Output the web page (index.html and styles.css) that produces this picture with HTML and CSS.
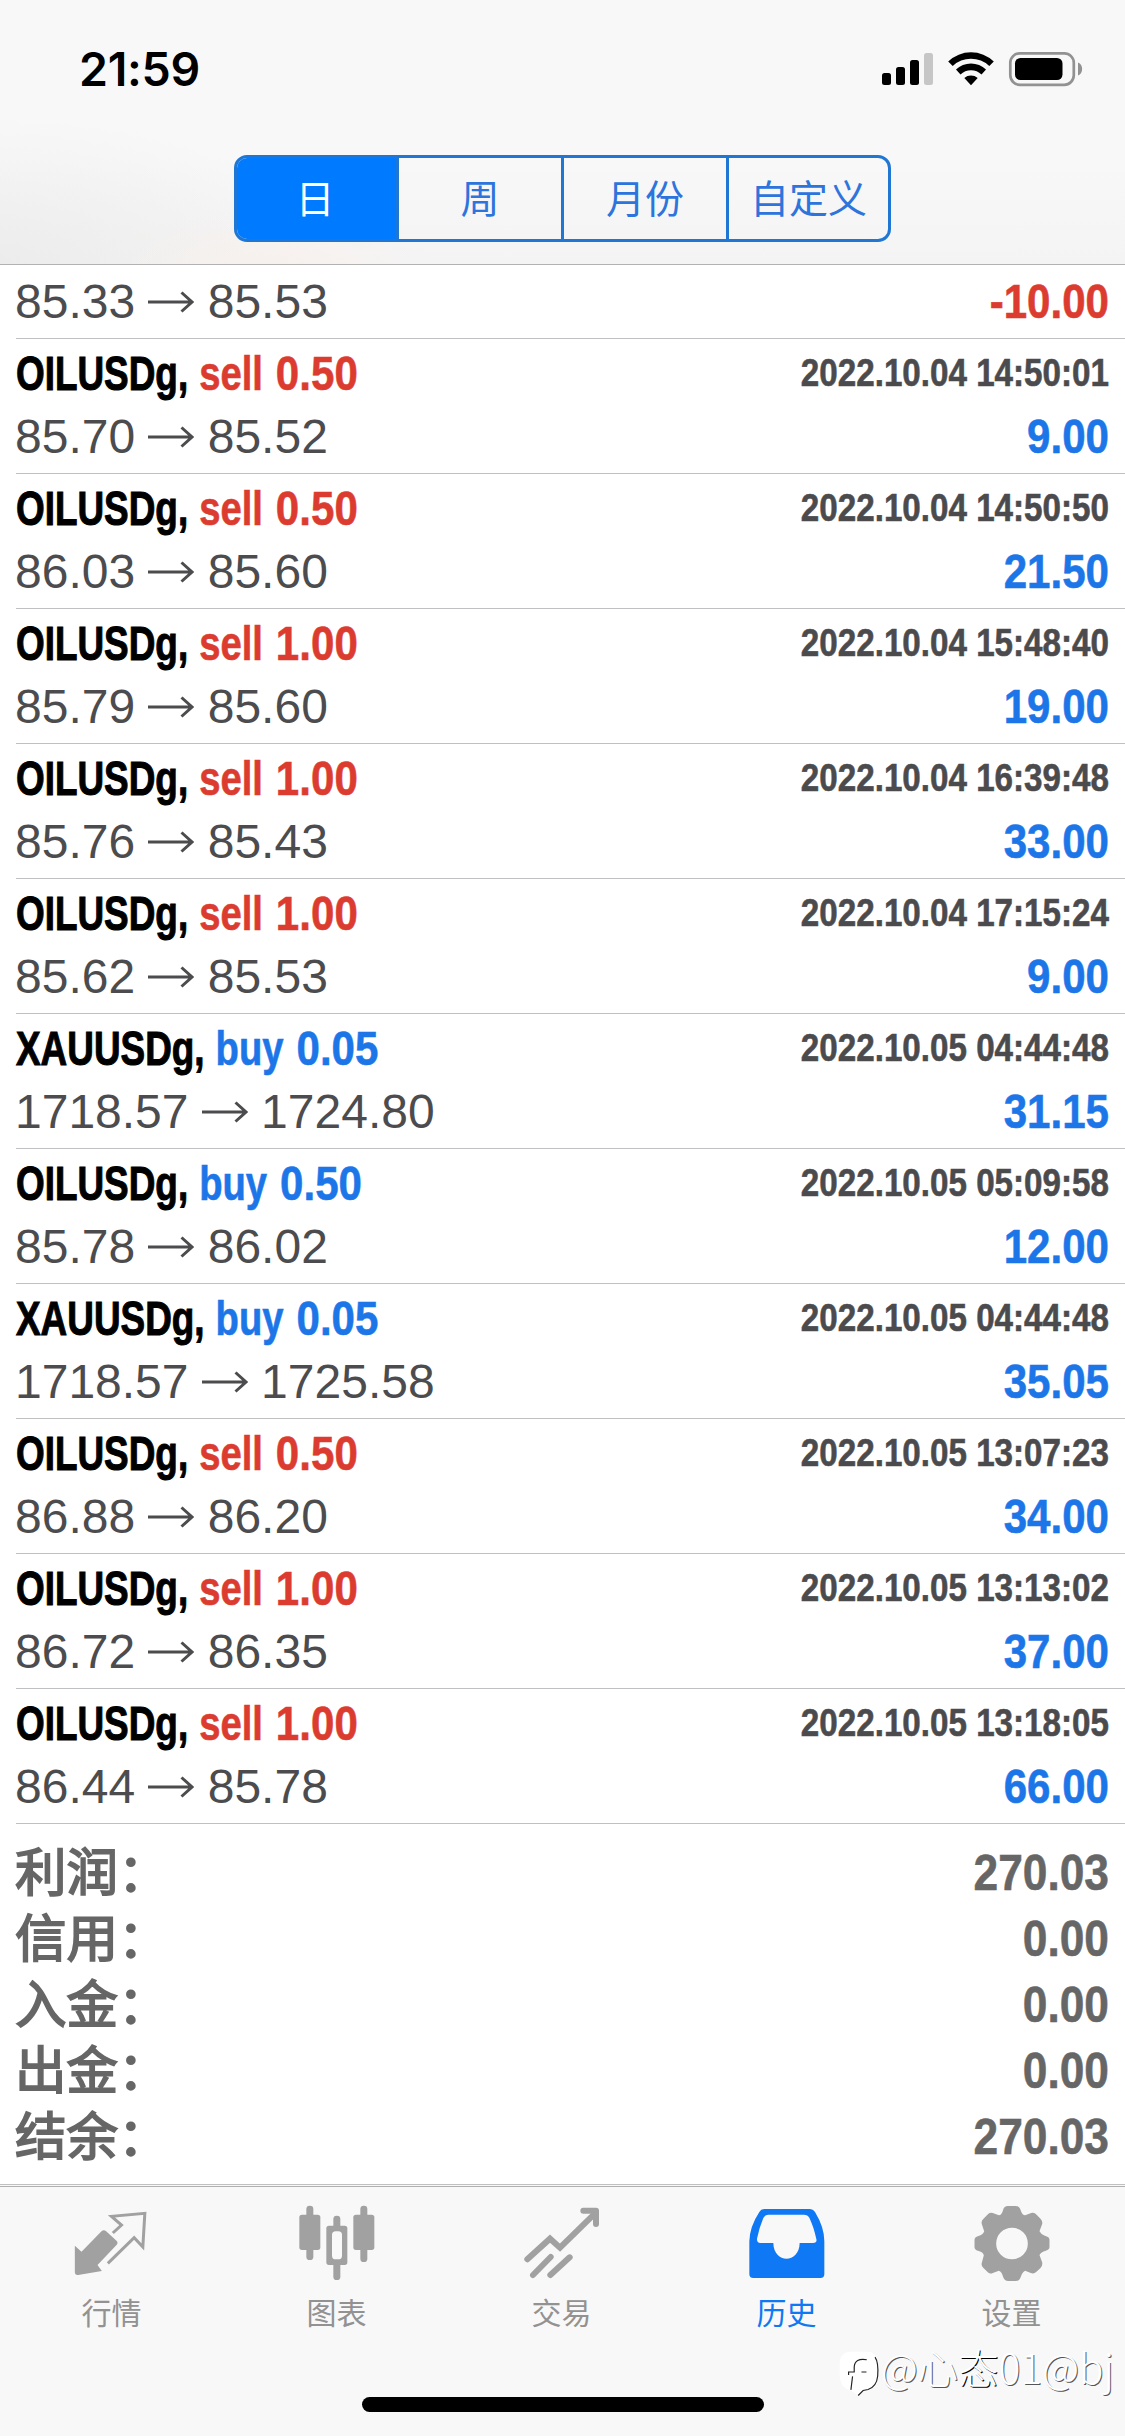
FILE: index.html
```
<!DOCTYPE html>
<html lang="zh-CN">
<head>
<meta charset="utf-8">
<title>历史</title>
<link rel="stylesheet" href="styles.css">
</head>
<body>
<div class="screen">
  <header class="header">
    <div class="status">
      <span class="clock">21:59</span>
      <svg class="status-icons" viewBox="880 48 206 42" width="206" height="42">
        <rect x="882" y="73" width="9" height="12" rx="2.5"/>
        <rect x="896" y="67" width="9" height="18" rx="2.5"/>
        <rect x="910" y="60" width="9" height="25" rx="2.5"/>
        <rect x="924" y="53" width="9" height="32" rx="2.5" fill="#c6c6c6"/>
        <path d="M948.2 61.500 A33 33 0 0 1 993.800 61.500 L989.300 66 A26.500 26.500 0 0 0 952.700 66Z M956 69.500 A21.500 21.500 0 0 1 986 69.500 L981.500 74.500 A15 15 0 0 0 960.500 74.500Z M964.300 78 A10.500 10.500 0 0 1 977.700 78 L971 85.200Z"/>
        <rect x="1010.300" y="53.300" width="63.500" height="31.500" rx="9.500" fill="none" stroke="#929292" stroke-width="2.700"/>
        <rect x="1015" y="58" width="47.500" height="22" rx="5.500"/>
        <path d="M1078 62.500 C1083.500 64.500 1083.500 73.500 1078 75.500Z" fill="#929292"/>
      </svg>
    </div>
    <nav class="segments">
      <span class="segment active">日</span><span class="segment">周</span><span class="segment">月份</span><span class="segment">自定义</span>
    </nav>
  </header>
  <main class="history" id="history">
  </main>
  <section class="summary">
    <div class="total"><span class="total-name">利润：</span><span class="total-value">270.03</span></div>
    <div class="total"><span class="total-name">信用：</span><span class="total-value">0.00</span></div>
    <div class="total"><span class="total-name">入金：</span><span class="total-value">0.00</span></div>
    <div class="total"><span class="total-name">出金：</span><span class="total-value">0.00</span></div>
    <div class="total"><span class="total-name">结余：</span><span class="total-value">270.03</span></div>
  </section>
  <footer class="footer">
    <div class="double-line"></div>
    <nav class="tabs">
      <div class="tab">
        <svg viewBox="217.500 99 240 240"><path fill="currentColor" d="M226 227 L246 245 L306 184 Q313 177 320 184 L351 212 Q357 218 351 225 L294 285 L307 303 L236 315 Q226 316 226 306Z"/><path fill="none" stroke="currentColor" stroke-width="9" d="M340 189 L366 165 L336 139 L436 130 L430 231 L404 203 L325 280"/></svg>
        <span>行情</span>
      </div>
      <div class="tab">
        <svg viewBox="890 99 240 240"><g fill="currentColor"><rect x="918" y="107" width="21" height="163" rx="10"/><rect x="897" y="134" width="63" height="106" rx="8"/><rect x="1080" y="107" width="21" height="169" rx="10"/><rect x="1059" y="134" width="63" height="106" rx="8"/><rect x="999" y="137" width="21" height="193" rx="10"/><rect x="978" y="167" width="63" height="118" rx="8"/></g><rect x="995" y="184" width="30" height="84" rx="11" fill="#f9f9f9"/></svg>
        <span>图表</span>
      </div>
      <div class="tab">
        <svg viewBox="215 99 240 240"><g fill="none" stroke="currentColor" stroke-width="18" stroke-linecap="round" stroke-linejoin="round"><path stroke-linejoin="miter" d="M231 268 L299 206 L329 233 L434 130"/><path d="M399 122 H437 V162"/><path d="M248 315 L301 261 M300 315 L358 262"/></g></svg>
        <span>交易</span>
      </div>
      <div class="tab active">
        <svg viewBox="890 99 240 240"><path fill="currentColor" fill-rule="evenodd" d="M943 117 H1077 Q1088 117 1094 126 Q1122 172 1122 214 V312 Q1122 324 1110 324 H909 Q897 324 897 312 V214 Q898 170 927 126 Q932 117 943 117Z M955 134 Q944 134 939 144 Q927 172 920 206 Q919 219 930 219 H969 C970 282 1047 282 1048 219 H1088 Q1101 219 1098 207 Q1090 170 1077 143 Q1072 134 1061 134Z"/></svg>
        <span>历史</span>
      </div>
      <div class="tab">
        <svg viewBox="514.500 99 240 240"><path fill="currentColor" fill-rule="evenodd" d="M608 119 Q611 108 622 108 H646 Q656 108 660 119 Q665 136 674 136 L692 129 Q699 126 706 132 L720 146 Q727 153 725 162 L717 184 Q721 193 733 197 Q747 200 747 209 V231 Q747 239 736 242 Q721 246 717 255 L725 277 Q727 287 720 294 L707 306 Q700 313 691 309 L674 302 Q665 306 661 320 Q657 333 646 333 H623 Q612 333 608 321 Q604 305 595 302 L577 309 Q569 313 562 307 L549 294 Q541 287 544 278 L550 256 Q547 246 535 243 Q522 240 522 231 V210 Q522 200 536 197 Q548 194 551 184 L544 163 Q541 153 549 146 L563 132 Q569 126 577 129 L595 136 Q604 135 608 119Z M634.500 173 A47.500 47.500 0 1 0 634.500 268 A47.500 47.500 0 1 0 634.500 173Z"/></svg>
        <span>设置</span>
      </div>
    </nav>
    <div class="home-bar"></div>
  </footer>
  <div class="watermark">
    <svg viewBox="28 44 124 150" width="41" height="50"><path fill="#fff" d="M62 52 H112 Q146 52 146 94 V130 Q146 165 108 168 L86 184 L62 168 Q30 160 30 120 V90 Q30 54 62 52Z"/><path fill="none" stroke="#222" stroke-width="3.500" d="M112 76 Q76 70 74 98 V113 H57 V122 M96 113 H111 M69 126 L64 167 M137 68 Q148 84 145 125 Q142 157 116 166 L101 169 L86 184"/></svg>
    <span>@心<b>态</b>01@bj</span>
  </div>
</div>
<script src="history.js"></script>
</body>
</html>
```
FILE: history.js
```
const deals = [
  ["OILUSDg", "sell", "0.50", "2022.10.04 14:50:01", "85.70", "85.52", "9.00"],
  ["OILUSDg", "sell", "0.50", "2022.10.04 14:50:50", "86.03", "85.60", "21.50"],
  ["OILUSDg", "sell", "1.00", "2022.10.04 15:48:40", "85.79", "85.60", "19.00"],
  ["OILUSDg", "sell", "1.00", "2022.10.04 16:39:48", "85.76", "85.43", "33.00"],
  ["OILUSDg", "sell", "1.00", "2022.10.04 17:15:24", "85.62", "85.53", "9.00"],
  ["XAUUSDg", "buy", "0.05", "2022.10.05 04:44:48", "1718.57", "1724.80", "31.15"],
  ["OILUSDg", "buy", "0.50", "2022.10.05 05:09:58", "85.78", "86.02", "12.00"],
  ["XAUUSDg", "buy", "0.05", "2022.10.05 04:44:48", "1718.57", "1725.58", "35.05"],
  ["OILUSDg", "sell", "0.50", "2022.10.05 13:07:23", "86.88", "86.20", "34.00"],
  ["OILUSDg", "sell", "1.00", "2022.10.05 13:13:02", "86.72", "86.35", "37.00"],
  ["OILUSDg", "sell", "1.00", "2022.10.05 13:18:05", "86.44", "85.78", "66.00"]
];

const priceLine = (open, close, profit) => `
  <div class="line price-line">
    <span class="prices">${open}<svg class="arrow" viewBox="0 0 46 22" width="46" height="22"><path d="M0 11H44M33.500 1.500L44 11L33.500 20.500"/></svg>${close}</span>
    <span class="profit ${profit.startsWith("-") ? "loss" : "gain"}">${profit}</span>
  </div>`;

document.getElementById("history").innerHTML =
  `<article class="deal clipped">${priceLine("85.33", "85.53", "-10.00")}</article>` +
  deals.map(([symbol, side, volume, time, open, close, profit]) => `
  <article class="deal">
    <div class="line title-line">
      <span class="title"><span class="symbol">${symbol},</span><span class="side ${side}">${side}</span><span class="volume ${side}">${volume}</span></span>
      <span class="time">${time}</span>
    </div>${priceLine(open, close, profit)}
  </article>`).join("");
```
FILE: styles.css
```
* { box-sizing: border-box; }
body {
  margin: 0;
  background: #fff;
  font-family: "Liberation Sans", "Noto Sans CJK SC", sans-serif;
  font-kerning: none;
}
.screen {
  position: relative;
  width: 1125px;
  height: 2436px;
  display: flex;
  flex-direction: column;
  overflow: hidden;
}

/* Header */
.header {
  height: 265px;
  border-bottom: 1px solid #b2b2b2;
  background:
    radial-gradient(ellipse 170px 70px at 270px 275px, rgba(250, 240, 232, .7), transparent),
    radial-gradient(ellipse 330px 150px at 0 265px, rgba(234, 234, 235, .8), transparent),
    linear-gradient(#f8f8f8 60%, #f4f4f5);
}
.status {
  height: 155px;
  display: flex;
  justify-content: space-between;
  align-items: flex-start;
  padding: 48px 39px 0 79px;
}
.clock {
  font: 600 46.500px/42px Inter, sans-serif;
  letter-spacing: -0.300px;
}
.segments {
  width: 657px;
  height: 87px;
  margin-left: 234px;
  display: grid;
  grid-template-columns: 159px 165px 165px 162px;
  border: 3px solid #1f76d3;
  border-radius: 13px;
  overflow: hidden;
}
.segment {
  display: flex;
  align-items: center;
  justify-content: center;
  padding-bottom: 6px;
  font: 400 39px/60px "Noto Sans CJK SC", sans-serif;
  color: #2d74dc;
}
.segment + .segment { border-left: 3px solid #1f76d3; }
.segment.active {
  margin: -3px 0 -3px -3px;
  background: #007aff;
  color: #fff;
}

/* Deals */
.deal {
  height: 135px;
  margin-left: 16px;
  padding-right: 16px;
  border-bottom: 1px solid #c0c0c2;
}
.deal.clipped {
  height: 74px;
  padding-top: 7px;
}
.line {
  display: flex;
  justify-content: space-between;
  align-items: center;
}
.title-line {
  height: 68px;
  padding-top: 2px;
}
.price-line { height: 59px; }
.title, .prices { display: flex; align-items: center; }
.prices { margin-left: -1px; }

/* Condensed lettering: a smaller size stretched vertically */
.symbol, .side, .volume, .profit, .time, .total-value {
  font-weight: 700;
  white-space: pre;
  -webkit-text-stroke: .5px currentColor;
}
.symbol {
  font-size: 36.900px;
  transform: scaleY(1.300);
  margin-right: 11px;
  -webkit-text-stroke-width: .8px;
}
.side {
  font-size: 38.200px;
  transform: scaleY(1.256);
  margin-right: 13px;
}
.volume, .profit {
  font-size: 42.100px;
  transform: scaleY(1.140);
}
.time {
  font-size: 33.200px;
  color: #4b4b4e;
  transform: translateY(-1px) scaleY(1.160);
}
.prices {
  font-size: 48px;
  color: #4c4c4f;
}
.arrow {
  margin: 0 13.300px;
  fill: none;
  stroke: #4c4c4f;
  stroke-width: 3;
}
.sell, .loss { color: #dc3c30; }
.buy, .gain { color: #1c76e8; }

/* Totals */
.summary {
  height: 360px;
  padding: 16px 16px 0;
  color: #666;
}
.total {
  height: 66px;
  display: flex;
  justify-content: space-between;
  align-items: center;
}
.total-name {
  margin: 0 0 8px -1px;
  font: 400 51.500px/58px "Noto Sans CJK SC", sans-serif;
  -webkit-text-stroke: 1.800px currentColor;
}
.total-value {
  font-size: 44.300px;
  transform: scaleY(1.146);
}

/* Bottom bar */
.footer {
  flex: 1;
  background: #f8f8f8;
}
.double-line {
  height: 3px;
  border-top: 1px solid #c0c0c0;
  border-bottom: 1px solid #b0b0b0;
}
.tabs {
  display: grid;
  grid-template-columns: repeat(5, 1fr);
  margin-left: -1px;
  margin-right: 1px;
  padding-top: 16px;
}
.tab {
  display: flex;
  flex-direction: column;
  align-items: center;
  color: #a1a1a1;
}
.tab svg { width: 80px; height: 80px; }
.tab span {
  margin-top: 8px;
  font: 400 30px/40px "Noto Sans CJK SC", sans-serif;
  color: #929292;
}
.tab.active, .tab.active span { color: #0f78f4; }
.home-bar {
  width: 402px;
  height: 15px;
  margin: 66px auto 0;
  border-radius: 8px;
  background: #000;
}
.watermark {
  position: absolute;
  left: 839px;
  top: 2349px;
  display: flex;
  align-items: flex-start;
}
.watermark span {
  margin: -4px 0 0 1px;
  font: 300 40.500px/44px "Noto Sans CJK SC", sans-serif;
  color: #fff;
  text-shadow: 1px 1px 0 #555;
  white-space: nowrap;
}
.watermark b {
  font-weight: 300;
  text-shadow: 1px 1px 0 #000;
}
```
